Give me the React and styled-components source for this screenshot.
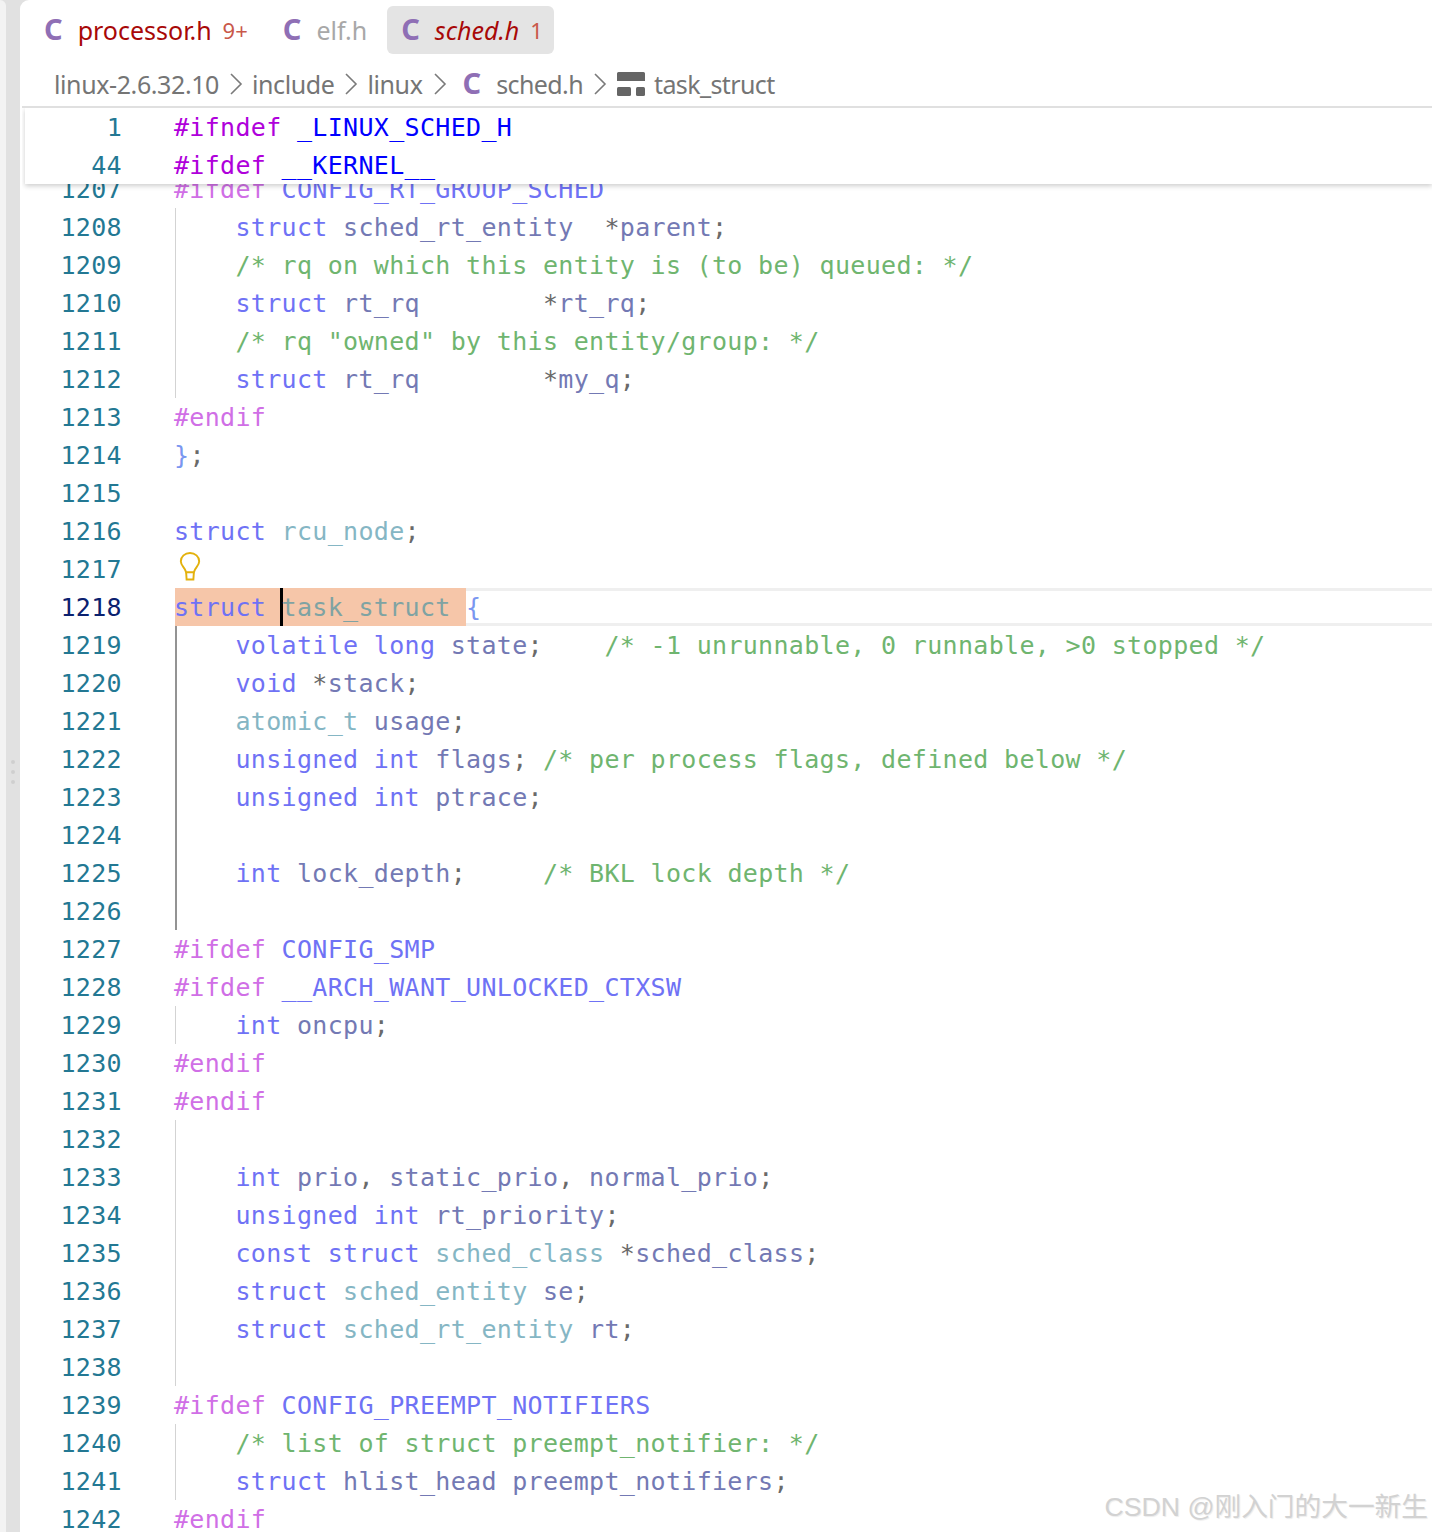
import React from 'react'
import styled, {createGlobalStyle} from 'styled-components'

const KW = 'kw', TY = 'ty', ID = 'id', CM = 'cm', PP = 'pp', MC = 'mc', PU = 'pu', BR = 'br'

// each line: [number, guide, tokens]
const LINES = [
    [1207, 0, [[PP, '#ifdef'], [MC, ' CONFIG_RT_GROUP_SCHED']]],
    [1208, 1, [[KW, '    struct'], [ID, ' sched_rt_entity  '], [PU, '*'], [ID, 'parent'], [PU, ';']]],
    [1209, 1, [[CM, '    /* rq on which this entity is (to be) queued: */']]],
    [1210, 1, [[KW, '    struct'], [ID, ' rt_rq        '], [PU, '*'], [ID, 'rt_rq'], [PU, ';']]],
    [1211, 1, [[CM, '    /* rq "owned" by this entity/group: */']]],
    [1212, 1, [[KW, '    struct'], [ID, ' rt_rq        '], [PU, '*'], [ID, 'my_q'], [PU, ';']]],
    [1213, 0, [[PP, '#endif']]],
    [1214, 0, [[BR, '}'], [PU, ';']]],
    [1215, 0, []],
    [1216, 0, [[KW, 'struct'], [TY, ' rcu_node'], [PU, ';']]],
    [1217, 0, [], 'bulb'],
    [1218, 0, [], 'active'],
    [1219, 2, [[KW, '    volatile long'], [ID, ' state'], [PU, ';'], [CM, '    /* -1 unrunnable, 0 runnable, >0 stopped */']]],
    [1220, 2, [[KW, '    void'], [PU, ' *'], [ID, 'stack'], [PU, ';']]],
    [1221, 2, [[TY, '    atomic_t'], [ID, ' usage'], [PU, ';']]],
    [1222, 2, [[KW, '    unsigned int'], [ID, ' flags'], [PU, '; '], [CM, '/* per process flags, defined below */']]],
    [1223, 2, [[KW, '    unsigned int'], [ID, ' ptrace'], [PU, ';']]],
    [1224, 2, []],
    [1225, 2, [[KW, '    int'], [ID, ' lock_depth'], [PU, ';'], [CM, '     /* BKL lock depth */']]],
    [1226, 2, []],
    [1227, 0, [[PP, '#ifdef'], [MC, ' CONFIG_SMP']]],
    [1228, 0, [[PP, '#ifdef'], [MC, ' __ARCH_WANT_UNLOCKED_CTXSW']]],
    [1229, 1, [[KW, '    int'], [ID, ' oncpu'], [PU, ';']]],
    [1230, 0, [[PP, '#endif']]],
    [1231, 0, [[PP, '#endif']]],
    [1232, 1, []],
    [1233, 1, [[KW, '    int'], [ID, ' prio'], [PU, ', '], [ID, 'static_prio'], [PU, ', '], [ID, 'normal_prio'], [PU, ';']]],
    [1234, 1, [[KW, '    unsigned int'], [ID, ' rt_priority'], [PU, ';']]],
    [1235, 1, [[KW, '    const struct'], [TY, ' sched_class'], [PU, ' *'], [ID, 'sched_class'], [PU, ';']]],
    [1236, 1, [[KW, '    struct'], [TY, ' sched_entity'], [ID, ' se'], [PU, ';']]],
    [1237, 1, [[KW, '    struct'], [TY, ' sched_rt_entity'], [ID, ' rt'], [PU, ';']]],
    [1238, 1, []],
    [1239, 0, [[PP, '#ifdef'], [MC, ' CONFIG_PREEMPT_NOTIFIERS']]],
    [1240, 1, [[CM, '    /* list of struct preempt_notifier: */']]],
    [1241, 1, [[KW, '    struct'], [ID, ' hlist_head preempt_notifiers'], [PU, ';']]],
    [1242, 0, [[PP, '#endif']]],
]

const COLORS = {
    kw: '#6f72f5', ty: '#85b6c4', id: '#7379b4', cm: '#6fb56f', pp: '#d06fe6',
    mc: '#6f72f5', pu: '#6a6a6a', br: '#7a96f0', hash: '#af00db', macro: '#0000ff',
}

const CIcon = ({small}) => <FileIcon $small={small}>C</FileIcon>

const Chevron = () => (
    <ChevronSvg viewBox="0 0 14 24" width="14" height="24">
        <path d="M2 2 L12 12 L2 22" fill="none" stroke="#7a7a7a" strokeWidth="1.6"/>
    </ChevronSvg>
)

const StructIcon = () => (
    <StructSvg viewBox="0 0 28 24" width="28" height="24">
        <path d="M1.5 0h25a1.5 1.5 0 0 1 1.5 1.5V9H0V1.5A1.5 1.5 0 0 1 1.5 0z" fill="#656565"/>
        <rect x="0" y="15" width="14" height="9" rx="1.5" fill="#656565"/>
        <rect x="19" y="15" width="9" height="9" rx="1.5" fill="#656565"/>
    </StructSvg>
)

const Bulb = () => (
    <BulbSvg viewBox="0 0 22 30" width="22" height="29">
        <path d="M7 21 C6 16 1.5 14.5 1.5 9.5 A9.5 8.5 0 0 1 20.5 9.5 C20.5 14.5 16 16 15 21 Z" fill="none" stroke="#e3b10c" strokeWidth="2"/>
        <path d="M7 21 L7.5 28.5 H14.5 L15 21" fill="none" stroke="#e3b10c" strokeWidth="2"/>
    </BulbSvg>
)

const App = () => (
    <>
        <GlobalStyle/>
        <Page>
            <Rail>
                <RailEdge/>
                <SashDots><i/><i/><i/></SashDots>
            </Rail>
            <Main>
                <TabBar>
                    <Tab $first>
                        <CIcon/>
                        <TabName>processor.h</TabName>
                        <TabBadge>9+</TabBadge>
                    </Tab>
                    <Tab>
                        <CIcon/>
                        <TabName $muted>elf.h</TabName>
                    </Tab>
                    <Tab $active>
                        <CIcon/>
                        <TabName $italic>sched.h</TabName>
                        <TabBadge>1</TabBadge>
                    </Tab>
                </TabBar>
                <Breadcrumbs>
                    <Crumb>linux-2.6.32.10</Crumb><Chevron/>
                    <Crumb>include</Crumb><Chevron/>
                    <Crumb>linux</Crumb><Chevron/>
                    <CIcon small/>
                    <Crumb $tight>sched.h</Crumb><Chevron/>
                    <StructIcon/>
                    <Crumb $tight>task_struct</Crumb>
                </Breadcrumbs>
                <Editor>
                    <Sticky>
                        <StickyRow>
                            <LineNo>1</LineNo>
                            <Code><Tok $c="hash">#ifndef</Tok><Tok $c="macro"> _LINUX_SCHED_H</Tok></Code>
                        </StickyRow>
                        <StickyRow>
                            <LineNo>44</LineNo>
                            <Code><Tok $c="hash">#ifdef</Tok><Tok $c="macro"> __KERNEL__</Tok></Code>
                        </StickyRow>
                    </Sticky>
                    <Lines>
                        {LINES.map(([no, guide, toks, kind]) => (
                            <Row key={no}>
                                <LineNo $active={kind === 'active'}>{no}</LineNo>
                                <Code $guide={guide} $current={kind === 'active'}>
                                    {kind === 'bulb' && <Bulb/>}
                                    {kind === 'active' && (
                                        <>
                                            <Selected>
                                                <Tok $c="kw">struct </Tok>
                                                <Caret/>
                                                <Tok $c="sel">task_struct </Tok>
                                            </Selected>
                                            <Tok $c="br">{'{'}</Tok>
                                        </>
                                    )}
                                    {toks.map(([c, text], i) => <Tok key={i} $c={c}>{text}</Tok>)}
                                </Code>
                            </Row>
                        ))}
                    </Lines>
                </Editor>
            </Main>
            <Watermark>CSDN @刚入门的大一新生</Watermark>
        </Page>
    </>
)

const GlobalStyle = createGlobalStyle`
    html, body {
        margin: 0;
        padding: 0;
        background: #ffffff;
    }
`
const Page = styled.div`
    position: relative;
    display: flex;
    width: 1432px;
    height: 1532px;
    overflow: hidden;
    background: #e1e1e1;
`
const Rail = styled.div`
    flex: none;
    display: flex;
    width: 20px;
`
const RailEdge = styled.div`
    flex: none;
    width: 6px;
    background: #f3f3f3;
    border-top-right-radius: 6px;
`
const SashDots = styled.div`
    display: flex;
    flex-direction: column;
    justify-content: center;
    align-items: center;
    gap: 6px;
    width: 16px;
    padding-top: 12px;
    i {
        display: block;
        width: 4px;
        height: 4px;
        border-radius: 50%;
        background: #cfcfcf;
    }
`
const Main = styled.div`
    flex: 1;
    min-width: 0;
    display: flex;
    flex-direction: column;
    padding-left: 2px;
    background: #ffffff;
    border-top-left-radius: 9px;
    font-family: "Noto Sans", "Open Sans", sans-serif;
`
const TabBar = styled.div`
    display: flex;
    align-items: stretch;
    height: 48px;
    margin-top: 6px;
    padding-left: 14px;
`
const Tab = styled.div`
    display: flex;
    align-items: center;
    gap: 15px;
    padding: 0 ${p => p.$active ? '11px' : '20px'} 0 ${p => p.$first ? '8px' : p.$active ? '14px' : '15px'};
    border-radius: 6px;
    background: ${p => p.$active ? '#e4e4e4' : 'transparent'};
`
const FileIcon = styled.span`
    font-family: "Noto Sans", sans-serif;
    font-size: 29px;
    font-weight: 700;
    line-height: 1;
    color: #8f6fb5;
    margin-top: -4px;
    margin-right: ${p => p.$small ? '15px' : '0'};
    margin-left: ${p => p.$small ? '7px' : '0'};
`
const TabName = styled.span`
    font-size: 25px;
    color: ${p => p.$muted ? '#a8a8a8' : '#a80808'};
    font-style: ${p => p.$italic ? 'italic' : 'normal'};
`
const TabBadge = styled.span`
    font-size: 22px;
    color: #c9584a;
    margin-left: -4px;
`
const Breadcrumbs = styled.div`
    display: flex;
    align-items: center;
    height: 32px;
    margin-top: 14px;
    padding: 0 0 6px 32px;
    font-size: 25px;
    color: #757575;
    border-bottom: 2px solid #e0e0e0;
`
const Crumb = styled.span`
    letter-spacing: ${p => p.$tight ? '-0.6px' : '-0.4px'};
`
const ChevronSvg = styled.svg`
    flex: none;
    margin: 0 9px 0 10px;
`
const StructSvg = styled.svg`
    flex: none;
    margin: 0 9px 0 1px;
`
const Editor = styled.div`
    position: relative;
    flex: 1;
    overflow: hidden;
`
const Sticky = styled.div`
    position: absolute;
    z-index: 2;
    top: 0;
    left: 3px;
    right: 0;
    background: #ffffff;
    box-shadow: 0 2px 5px rgba(0, 0, 0, 0.2);
`
const Lines = styled.div`
    padding-top: 62px;
`
const Row = styled.div`
    display: flex;
    height: 38px;
    font-family: "DejaVu Sans Mono", monospace;
    font-size: 25px;
    letter-spacing: 0.32px;
    line-height: 40px;
    white-space: pre;
`
const StickyRow = styled(Row)`
    margin-left: -3px;
`
const LineNo = styled.div`
    flex: none;
    width: 100px;
    text-align: right;
    color: ${p => p.$active ? '#0b216f' : '#237893'};
`
const Code = styled.div`
    position: relative;
    flex: 1;
    margin-left: 53px;
    box-sizing: border-box;
    text-indent: ${p => p.$current ? '0' : '-1px'};
    ${p => p.$current && `
        border-top: 3px solid #efefef;
        border-bottom: 3px solid #efefef;
        line-height: 34px;
    `}
    ${p => p.$guide ? `
        &::before {
            content: "";
            position: absolute;
            left: 0;
            top: 0;
            bottom: 0;
            width: ${p.$guide === 2 ? '2px' : '1px'};
            background: ${p.$guide === 2 ? '#939393' : '#d3d3d3'};
        }
    ` : ''}
`
const Tok = styled.span`
    color: ${p => p.$c === 'sel' ? '#7fa3a3' : COLORS[p.$c]};
`
const Selected = styled.span`
    position: relative;
    display: inline-block;
    height: 38px;
    margin: -3px 0;
    vertical-align: top;
    line-height: 40px;
    text-indent: -1px;
    background: #f6c6a9;
`
const Caret = styled.span`
    display: inline-block;
    width: 3px;
    height: 38px;
    margin: 0 -1px 0 -2px;
    vertical-align: top;
    background: #000000;
`
const BulbSvg = styled.svg`
    position: absolute;
    left: 4px;
    top: 2px;
`
const Watermark = styled.div`
    position: absolute;
    z-index: 3;
    right: 4px;
    bottom: 8px;
    font-family: "Liberation Sans", "Noto Sans CJK SC", sans-serif;
    font-size: 26.7px;
    line-height: 34px;
    color: #d2d2d2;
    text-shadow: 1px 1px 1px rgba(0, 0, 0, 0.08);
`
export default App
